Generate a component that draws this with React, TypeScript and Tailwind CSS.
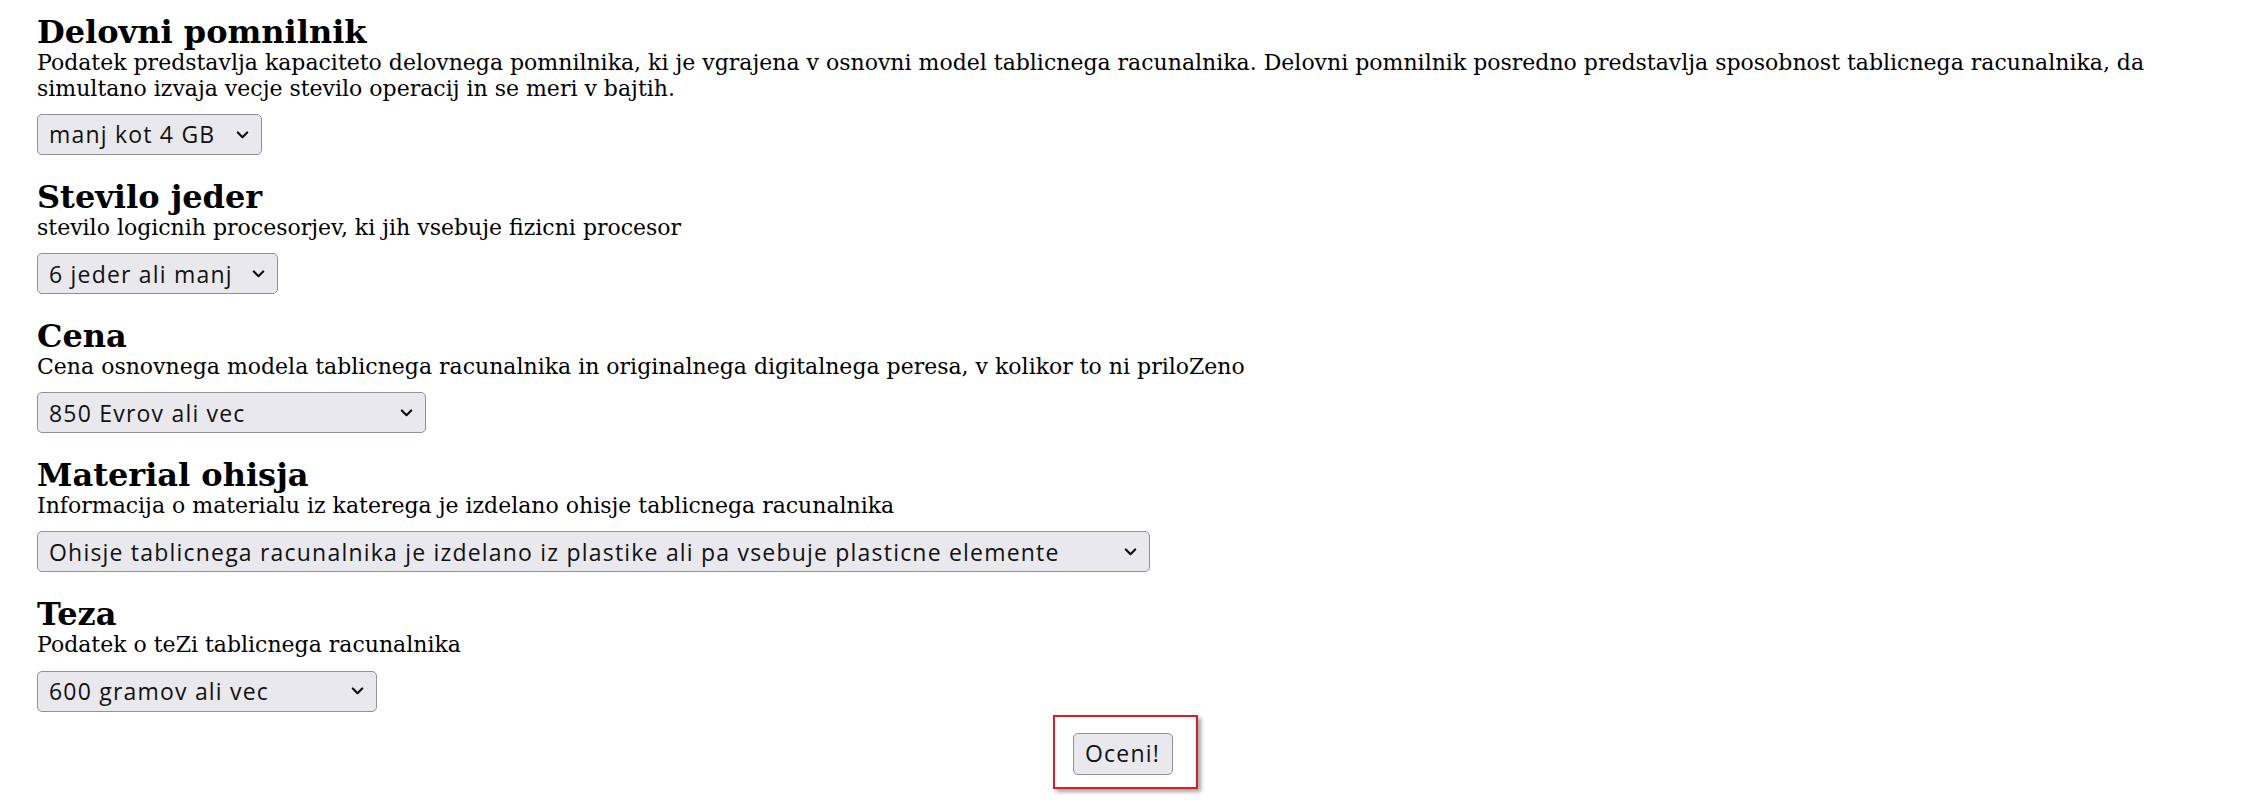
const SECTIONS = [
  {
    title: 'Delovni pomnilnik',
    desc: 'Podatek predstavlja kapaciteto delovnega pomnilnika, ki je vgrajena v osnovni model tablicnega racunalnika. Delovni pomnilnik posredno predstavlja sposobnost tablicnega racunalnika, da simultano izvaja vecje stevilo operacij in se meri v bajtih.',
    value: 'manj kot 4 GB',
    width: 'w-[225px]',
  },
  {
    title: 'Stevilo jeder',
    desc: 'stevilo logicnih procesorjev, ki jih vsebuje fizicni procesor',
    value: '6 jeder ali manj',
    width: 'w-[241px]',
  },
  {
    title: 'Cena',
    desc: 'Cena osnovnega modela tablicnega racunalnika in originalnega digitalnega peresa, v kolikor to ni priloZeno',
    value: '850 Evrov ali vec',
    width: 'w-[389px]',
  },
  {
    title: 'Material ohisja',
    desc: 'Informacija o materialu iz katerega je izdelano ohisje tablicnega racunalnika',
    value: 'Ohisje tablicnega racunalnika je izdelano iz plastike ali pa vsebuje plasticne elemente',
    width: 'w-[1113px]',
  },
  {
    title: 'Teza',
    desc: 'Podatek o teZi tablicnega racunalnika',
    value: '600 gramov ali vec',
    width: 'w-[340px]',
  },
]

function Chevron() {
  return (
    <svg
      width="13"
      height="9"
      viewBox="0 0 13 9"
      className="absolute right-[13px] top-1/2 -translate-y-1/2 pointer-events-none"
    >
      <path d="M1.8 2 L6.5 6.7 L11.2 2" fill="none" stroke="#111" strokeWidth="2.2" strokeLinecap="round" strokeLinejoin="round" />
    </svg>
  )
}

export default function App() {
  return (
    <div className="min-h-screen bg-white text-black px-[37px] pt-[15px] font-['DejaVu_Serif',serif]">
      <div className="flex flex-col gap-[24.5px]">
        {SECTIONS.map(s => (
          <div key={s.title}>
            <h3 className="text-[32px] leading-[35px] font-bold">{s.title}</h3>
            <p className="text-[22px] leading-[25.6px]">{s.desc}</p>
            <div className={`relative mt-[13px] ${s.width}`}>
              <select
                defaultValue={s.value}
                className="appearance-none w-full h-[41px] pl-[11px] pr-[36px] bg-[#e9e9ed] border border-[#8f8f9d] rounded-[5px] text-[23px] tracking-[1.2px] text-[#111] font-['Open_Sans',sans-serif] outline-none"
              >
                <option>{s.value}</option>
              </select>
              <Chevron />
            </div>
          </div>
        ))}
      </div>

      <div className="flex justify-center mt-[3px]">
        <div className="ml-[5px] border-2 border-[#dc1c24] pt-[16px] pb-[12px] pl-[18px] pr-[23px] shadow-[3px_3px_4px_rgba(0,0,0,0.35)]">
          <button className="w-[100px] h-[42px] bg-[#e9e9ed] border border-[#8f8f9d] rounded-[5px] text-[23px] tracking-[1.2px] text-[#111] font-['Open_Sans',sans-serif]">
            Oceni!
          </button>
        </div>
      </div>
    </div>
  )
}
